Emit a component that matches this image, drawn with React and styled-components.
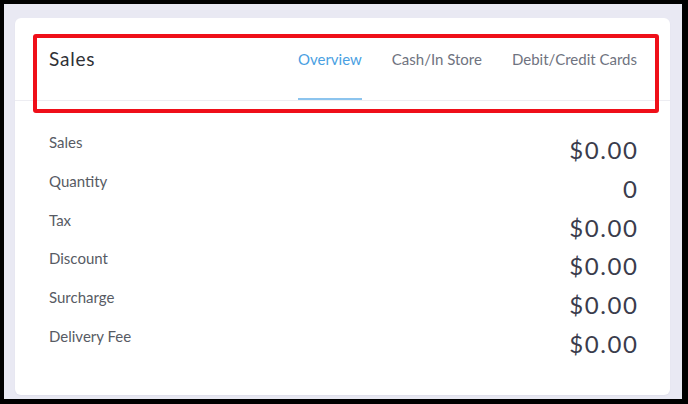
import React from "react";
import styled, { createGlobalStyle } from "styled-components";

const Global = createGlobalStyle`
  html, body { margin: 0; padding: 0; background: #000; }
  body { font-family: Lato, "Noto Sans", sans-serif; }
`;

const Frame = styled.div`
  box-sizing: border-box;
  width: 678px;
  height: 395px;
  margin: 4px 6px 5px 4px;
  background: #e9e9f3;
  padding: 14px 12px 4px 11px;
  display: flex;
`;

const Card = styled.section`
  position: relative;
  flex: 1;
  background: #fff;
  border-radius: 6px;
  box-shadow: 0 1px 2px rgba(60, 60, 100, 0.06);
  display: flex;
  flex-direction: column;
`;

const Header = styled.header`
  box-sizing: border-box;
  height: 83px;
  padding: 0 33px 0 34px;
  display: flex;
  align-items: stretch;
  justify-content: space-between;
  border-bottom: 1px solid #ededf2;
`;

const Title = styled.h2`
  margin: 29px 0 0;
  font-size: 19px;
  line-height: 24px;
  font-weight: 400;
  letter-spacing: 0.8px;
  color: #2f3136;
`;

const Tabs = styled.nav`
  display: flex;
  gap: 30px;
`;

const Tab = styled.div`
  box-sizing: border-box;
  padding-top: 31px;
  font-size: 15px;
  line-height: 20px;
  color: ${(p) => (p.$active ? "#4a9fe2" : "#6f7380")};
  border-bottom: 2px solid ${(p) => (p.$active ? "#8cc4ee" : "transparent")};
`;

const Body = styled.div`
  padding: 29px 33px 0 34px;
  display: flex;
  flex-direction: column;
`;

const Row = styled.div`
  height: 38.8px;
  display: flex;
  justify-content: space-between;
  align-items: flex-start;
`;

const Label = styled.span`
  font-size: 15px;
  line-height: 25px;
  color: #575b64;
`;

const Value = styled.span`
  font-size: 24px;
  line-height: 39px;
  letter-spacing: 1.6px;
  margin-right: -1.6px;
  color: #3a3c4c;
`;

const Highlight = styled.div`
  position: absolute;
  left: 18px;
  top: 16px;
  width: 626px;
  height: 79px;
  box-sizing: border-box;
  border: 4px solid #ef0f19;
  border-radius: 3px;
  pointer-events: none;
`;

const rows = [
  ["Sales", "$0.00"],
  ["Quantity", "0"],
  ["Tax", "$0.00"],
  ["Discount", "$0.00"],
  ["Surcharge", "$0.00"],
  ["Delivery Fee", "$0.00"],
];

export default function App() {
  return (
    <>
      <Global />
      <Frame>
        <Card>
          <Header>
            <Title>Sales</Title>
            <Tabs>
              <Tab $active>Overview</Tab>
              <Tab>Cash/In Store</Tab>
              <Tab>Debit/Credit Cards</Tab>
            </Tabs>
          </Header>
          <Body>
            {rows.map(([l, v]) => (
              <Row key={l}>
                <Label>{l}</Label>
                <Value>{v}</Value>
              </Row>
            ))}
          </Body>
          <Highlight />
        </Card>
      </Frame>
    </>
  );
}
